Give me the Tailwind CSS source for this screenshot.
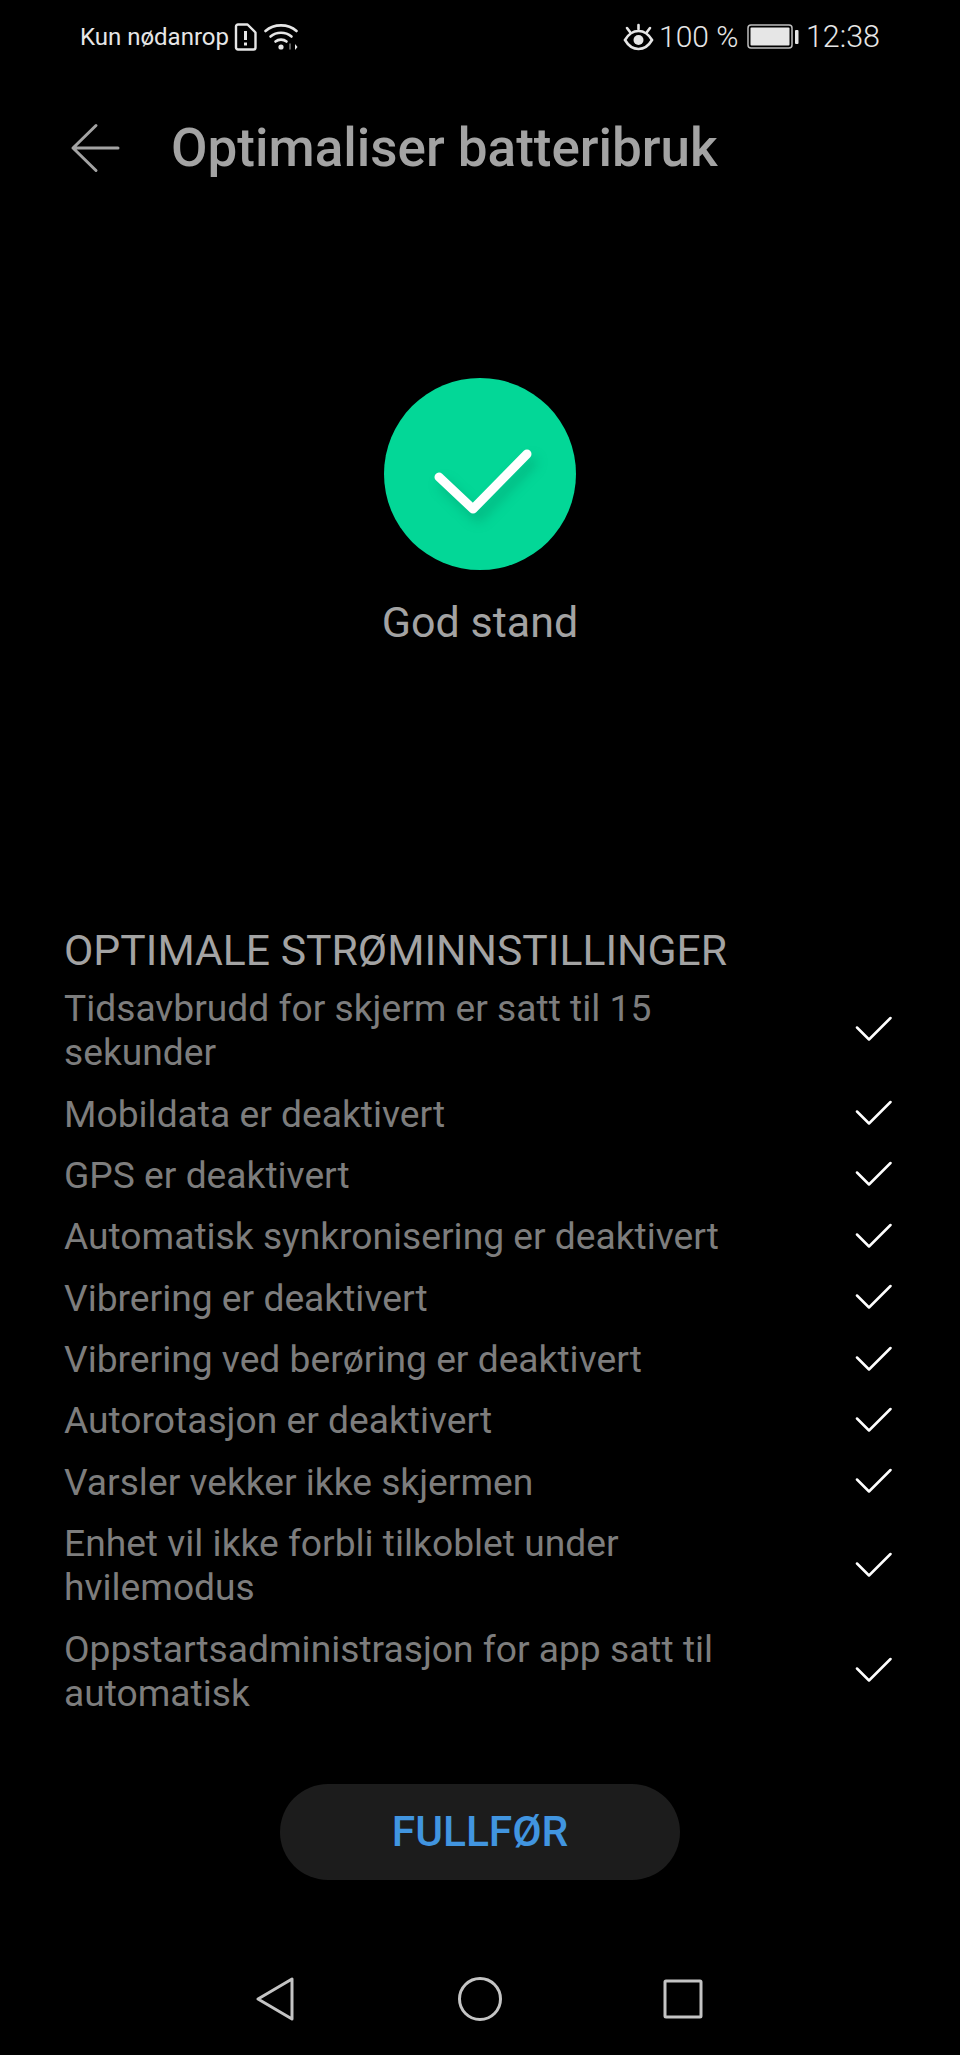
<!DOCTYPE html>
<html lang="no">
<head>
    <meta charset="UTF-8">
    <meta name="viewport" content="width=device-width, initial-scale=1.0">
    <title>Optimaliser batteribruk</title>
    <script src="https://cdn.jsdelivr.net/npm/@tailwindcss/browser@4"></script>
</head>
<body class="bg-black font-['Roboto',sans-serif]">
    <div class="w-[960px] h-[2055px] flex flex-col overflow-hidden bg-black">
        <!-- Status bar -->
        <div class="h-[74px] flex items-center justify-between pl-[80px] pr-[80px] text-[#e6e6e6]">
            <div class="flex items-center">
                <span class="text-[24px] leading-none">Kun nødanrop</span>
                <svg class="ml-[5px]" width="23" height="28" viewBox="0 0 23 28" fill="none" stroke="#e6e6e6" stroke-width="2.4">
                    <path d="M4 1.5h9.5l8 8v15a2 2 0 0 1-2 2H4a2 2 0 0 1-2-2v-21a2 2 0 0 1 2-2z" stroke-linejoin="round"/>
                    <path d="M11.5 8v9M11.5 19.5v3" stroke-width="3"/>
                </svg>
                <svg class="ml-[7px]" width="34" height="28" viewBox="0 0 34 28" fill="none" stroke="#e6e6e6" stroke-width="2.6" stroke-linecap="round">
                    <path d="M1.5 8C10 .5 24 .5 32.5 8"/>
                    <path d="M6.5 13.5C12.5 8.5 21.5 8.5 27.5 13.5"/>
                    <path d="M11.5 18.5C14.5 16 19.5 16 22.5 18.5"/>
                    <circle cx="17" cy="24" r="2.6" fill="#e6e6e6" stroke="none"/>
                    <path d="M31 21v6l2.5-3z" fill="#e6e6e6" stroke="none"/>
                    <path d="M26 21v5" stroke="#777" stroke-width="1.5"/>
                </svg>
            </div>
            <div class="flex items-center">
                <svg width="31" height="28" viewBox="0 0 31 28" fill="none" stroke="#e6e6e6" stroke-width="2.6" stroke-linecap="round">
                    <path d="M2 17c3.500-6 8-9 13.500-9s10 3 13.500 9c-3.500 6-8 9-13.500 9s-10-3-13.500-9z"/>
                    <circle cx="15.500" cy="17" r="5" fill="#e6e6e6" stroke="none"/>
                    <path d="M15.500 2v4M4 5l3 4M27 5l-3 4"/>
                </svg>
                <span class="ml-[5px] text-[30px] leading-none font-light">100 %</span>
                <svg class="ml-[9px]" width="52" height="26" viewBox="0 0 52 26" fill="none">
                    <rect x="1" y="1" width="44" height="23" rx="3" stroke="#bdbdbd" stroke-width="1.500"/>
                    <rect x="3.500" y="3.500" width="39" height="18" rx="1" fill="#e6e6e6"/>
                    <rect x="48" y="6" width="3.500" height="14" rx="1" fill="#e6e6e6"/>
                </svg>
                <span class="ml-[6.500px] text-[30.500px] leading-none font-light">12:38</span>
            </div>
        </div>

        <!-- Header -->
        <div class="mt-[34px] h-[80px] flex items-center pl-[70px]">
            <svg width="52" height="50" viewBox="0 0 52 50" fill="none" stroke="#a3a3a3" stroke-width="3" stroke-linecap="round" stroke-linejoin="round">
                <path d="M48 25H3M26 2.500L3 25l23 22.500"/>
            </svg>
            <h1 class="ml-[49px] text-[53px] leading-none font-medium text-[#a3a3a3]">Optimaliser batteribruk</h1>
        </div>

        <!-- Status circle -->
        <div class="mt-[190px] flex flex-col items-center">
            <div class="w-[192px] h-[192px] rounded-full bg-[#03d797] flex items-center justify-center">
                <svg class="drop-shadow-[5px_8px_6px_rgba(0,110,80,0.3)]" width="110" height="90" viewBox="0 0 110 90" fill="none" stroke-linecap="round" stroke-linejoin="round">
                    <path d="M14 48l34 32 54-55" stroke="#fff" stroke-width="9"/>
                </svg>
            </div>
            <p class="mt-[27px] text-[43px] leading-[50px] text-[#a3a3a3]">God stand</p>
        </div>

        <!-- Settings list -->
        <div class="mt-[277.500px] pl-[64px] pr-[68px]">
            <h2 class="mb-[3px] text-[42.700px] leading-[50px] text-[#a3a3a3]">OPTIMALE STRØMINNSTILLINGER</h2>
            <ul class="text-[37.200px] leading-[44px] text-[#7d7d7d]">
                <li class="flex items-center justify-between py-[8.700px]">
                    <span class="w-[680px]">Tidsavbrudd for skjerm er satt til 15 sekunder</span>
                    <svg class="mb-[2px]" width="37" height="26" viewBox="0 0 37 26" fill="none" stroke="#fff" stroke-width="2.500" stroke-linecap="round" stroke-linejoin="round"><path d="M2 11.500L14 23.500 35.500 2"/></svg>
                </li>
                <li class="flex items-center justify-between py-[8.700px]">
                    <span class="w-[680px]">Mobildata er deaktivert</span>
                    <svg class="mb-[1px]" width="37" height="26" viewBox="0 0 37 26" fill="none" stroke="#fff" stroke-width="2.500" stroke-linecap="round" stroke-linejoin="round"><path d="M2 11.500L14 23.500 35.500 2"/></svg>
                </li>
                <li class="flex items-center justify-between py-[8.700px]">
                    <span class="w-[680px]">GPS er deaktivert</span>
                    <svg class="mb-[1px]" width="37" height="26" viewBox="0 0 37 26" fill="none" stroke="#fff" stroke-width="2.500" stroke-linecap="round" stroke-linejoin="round"><path d="M2 11.500L14 23.500 35.500 2"/></svg>
                </li>
                <li class="flex items-center justify-between py-[8.700px]">
                    <span class="w-[680px]">Automatisk synkronisering er deaktivert</span>
                    <svg class="mb-[1px]" width="37" height="26" viewBox="0 0 37 26" fill="none" stroke="#fff" stroke-width="2.500" stroke-linecap="round" stroke-linejoin="round"><path d="M2 11.500L14 23.500 35.500 2"/></svg>
                </li>
                <li class="flex items-center justify-between py-[8.700px]">
                    <span class="w-[680px]">Vibrering er deaktivert</span>
                    <svg class="mb-[1px]" width="37" height="26" viewBox="0 0 37 26" fill="none" stroke="#fff" stroke-width="2.500" stroke-linecap="round" stroke-linejoin="round"><path d="M2 11.500L14 23.500 35.500 2"/></svg>
                </li>
                <li class="flex items-center justify-between py-[8.700px]">
                    <span class="w-[680px]">Vibrering ved berøring er deaktivert</span>
                    <svg class="mb-[1px]" width="37" height="26" viewBox="0 0 37 26" fill="none" stroke="#fff" stroke-width="2.500" stroke-linecap="round" stroke-linejoin="round"><path d="M2 11.500L14 23.500 35.500 2"/></svg>
                </li>
                <li class="flex items-center justify-between py-[8.700px]">
                    <span class="w-[680px]">Autorotasjon er deaktivert</span>
                    <svg class="mb-[1px]" width="37" height="26" viewBox="0 0 37 26" fill="none" stroke="#fff" stroke-width="2.500" stroke-linecap="round" stroke-linejoin="round"><path d="M2 11.500L14 23.500 35.500 2"/></svg>
                </li>
                <li class="flex items-center justify-between py-[8.700px]">
                    <span class="w-[680px]">Varsler vekker ikke skjermen</span>
                    <svg class="mb-[1px]" width="37" height="26" viewBox="0 0 37 26" fill="none" stroke="#fff" stroke-width="2.500" stroke-linecap="round" stroke-linejoin="round"><path d="M2 11.500L14 23.500 35.500 2"/></svg>
                </li>
                <li class="flex items-center justify-between py-[8.700px]">
                    <span class="w-[680px]">Enhet vil ikke forbli tilkoblet under hvilemodus</span>
                    <svg class="mb-[1px]" width="37" height="26" viewBox="0 0 37 26" fill="none" stroke="#fff" stroke-width="2.500" stroke-linecap="round" stroke-linejoin="round"><path d="M2 11.500L14 23.500 35.500 2"/></svg>
                </li>
                <li class="flex items-center justify-between py-[8.700px]">
                    <span class="w-[680px]">Oppstartsadministrasjon for app satt til automatisk</span>
                    <svg class="mb-[1px]" width="37" height="26" viewBox="0 0 37 26" fill="none" stroke="#fff" stroke-width="2.500" stroke-linecap="round" stroke-linejoin="round"><path d="M2 11.500L14 23.500 35.500 2"/></svg>
                </li>
            </ul>
        </div>

        <!-- Finish button -->
        <div class="mt-[61px] flex justify-center">
            <button class="w-[400px] h-[96px] rounded-full bg-[#1c1c1c] text-[42.500px] font-medium text-[#4195e0]">FULLFØR</button>
        </div>

        <!-- Navigation bar -->
        <div class="mt-[97px] pl-[256px] pr-[257px] flex items-center justify-between">
            <svg width="38" height="44" viewBox="0 0 38 44" fill="none" stroke="#c4c4c4" stroke-width="3" stroke-linejoin="round"><path d="M36 2v40L2 22z"/></svg>
            <svg class="ml-[3px]" width="44" height="44" viewBox="0 0 44 44" fill="none" stroke="#c4c4c4" stroke-width="3"><circle cx="22" cy="22" r="20.500"/></svg>
            <svg width="40" height="40" viewBox="0 0 40 40" fill="none" stroke="#c4c4c4" stroke-width="3" stroke-linejoin="round"><rect x="2" y="2" width="36" height="36" rx="1"/></svg>
        </div>
    </div>
</body>
</html>
